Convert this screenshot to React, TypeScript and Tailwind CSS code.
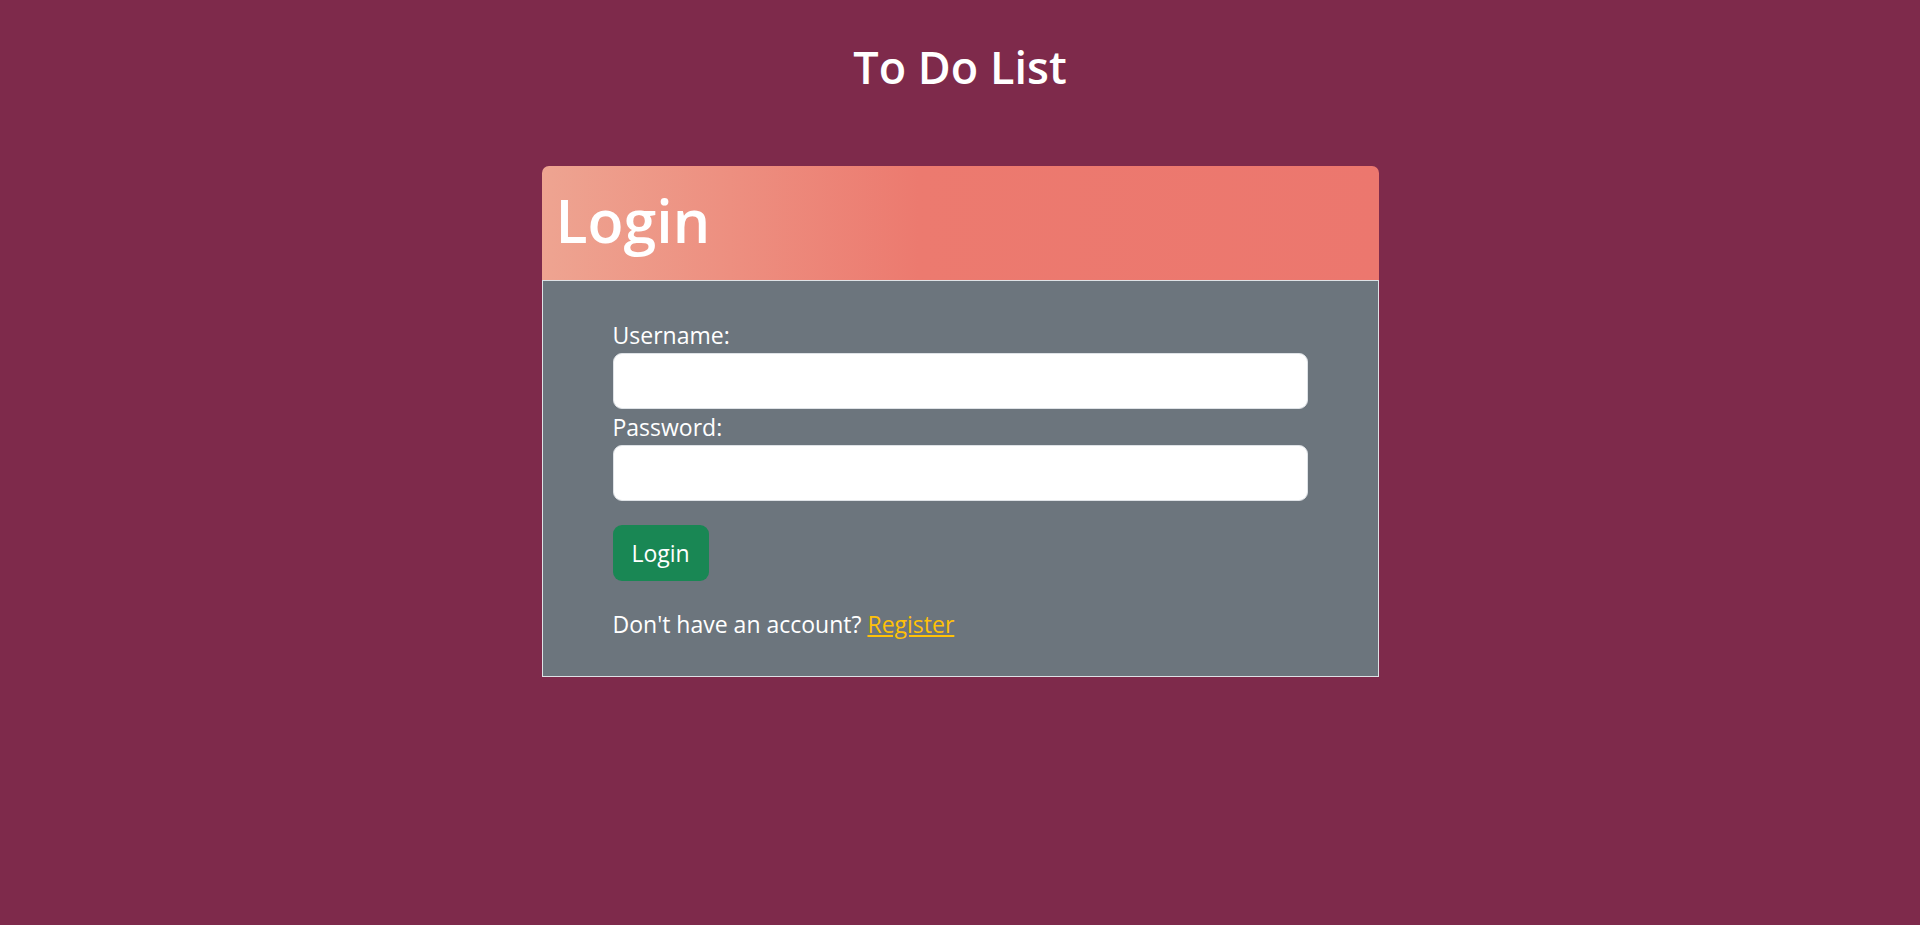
import React from 'react';

const App = () => {
    return (
        <div className="min-h-[925px] w-full bg-[#7e2a4b] font-['Open_Sans',sans-serif] text-white">
            {/* Title */}
            <h1 className="pt-[38px] text-center text-[45px] font-semibold leading-[57px]">To Do List</h1>

            {/* Login card */}
            <div className="mx-auto mt-[71px] w-[837px]">
                <div className="flex h-[114px] items-center rounded-t-[7px] bg-[linear-gradient(to_right,#eea491_0%,#ec7a6f_45%,#ec776e_100%)] pb-[6px] pl-[14px]">
                    <h2 className="text-[59px] font-semibold leading-none">Login</h2>
                </div>

                <div className="border border-[#dee2e6] bg-[#6c757d] px-[70px] pt-[36px] pb-[34px]">
                    <form className="flex flex-col">
                        <label className="text-[23px] leading-[36px]">Username:</label>
                        <input
                            type="text"
                            className="h-[56px] w-full rounded-[9px] border border-[#dee2e6] bg-white px-3 text-[23px] text-black outline-none"
                        />
                        <label className="text-[23px] leading-[36px]">Password:</label>
                        <input
                            type="password"
                            className="h-[56px] w-full rounded-[9px] border border-[#dee2e6] bg-white px-3 text-[23px] text-black outline-none"
                        />
                        <div className="mt-[24px]">
                            <button
                                type="button"
                                className="h-[56px] w-[96px] rounded-[9px] bg-[#198754] text-[23px] text-white"
                            >
                                Login
                            </button>
                        </div>
                    </form>

                    <p className="mt-[25px] text-[23px] leading-[36px]">
                        Don't have an account?{' '}
                        <a href="#" className="text-[#ffc107] underline">
                            Register
                        </a>
                    </p>
                </div>
            </div>
        </div>
    );
};

export default App;
